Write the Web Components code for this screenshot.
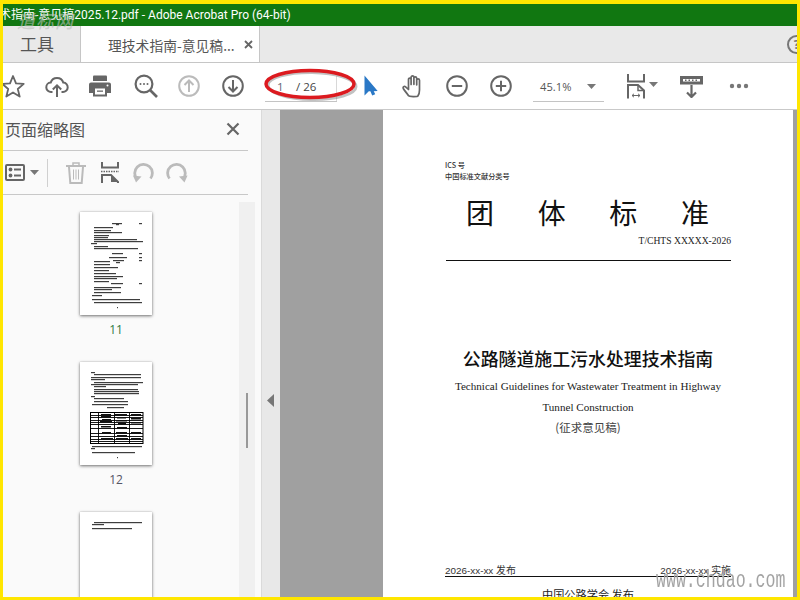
<!DOCTYPE html>
<html lang="zh"><head><meta charset="utf-8"><title>Acrobat</title>
<style>html,body{margin:0;padding:0;background:#fff}</style></head>
<body>
<acro-app>
  <acro-titlebar slot="title">术指南-意见稿2025.12.pdf - Adobe Acrobat Pro (64-bit)</acro-titlebar>
  <acro-tabs slot="tabs"></acro-tabs>
  <acro-toolbar slot="toolbar"></acro-toolbar>
  <acro-sidebar slot="side"></acro-sidebar>
  <acro-splitter slot="split"></acro-splitter>
  <acro-canvas slot="canvas"><acro-page></acro-page></acro-canvas>
  <acro-overlay slot="over"></acro-overlay>
</acro-app>
<script>
const SANS='"Open Sans","Noto Sans CJK SC",sans-serif';
const UI='Roboto,"Noto Sans CJK SC",sans-serif';
const CJK='"Noto Sans CJK SC",sans-serif';
const SERIF='"Liberation Serif","Noto Sans CJK SC",serif';
function def(name,css,html,init){
  customElements.define(name,class extends HTMLElement{
    constructor(){super();const r=this.attachShadow({mode:'open'});
      r.innerHTML='<style>'+css+'</style>'+(typeof html==='function'?html(this):html);}
    connectedCallback(){if(init)init(this);}
  });
}
const G='#666';
const ICONS={
 star:[24,24,`<polygon points="12,2 15,9.3 22.7,9.9 16.8,15 18.7,22.6 12,18.5 5.3,22.6 7.2,15 1.3,9.9 9,9.3" fill="none" stroke="${G}" stroke-width="1.8" stroke-linejoin="round"/>`],
 cloud:[24,24,`<path d="M7.5 18H6.3a4.7 4.7 0 0 1-.6-9.4 6.6 6.6 0 0 1 12.6 0 4.7 4.7 0 0 1-.6 9.4h-1.2" fill="none" stroke="${G}" stroke-width="2"/><path d="M12 23V11.5M7.8 15.5l4.2-4.2 4.2 4.2" fill="none" stroke="${G}" stroke-width="2"/>`],
 print:[24,24,`<path d="M6 1.500h12a1 1 0 0 1 1 1V7H5V2.500a1 1 0 0 1 1-1z" fill="${G}"/><path d="M3 8.500h18a2 2 0 0 1 2 2V19h-4v3.500H5V19H1v-8.500a2 2 0 0 1 2-2z" fill="${G}"/><rect x="7" y="14.500" width="10" height="6" fill="#fff"/><rect x="9" y="16.500" width="6" height="1.300" fill="${G}"/><circle cx="19.500" cy="11.500" r="1" fill="#fff"/>`],
 search:[24,24,`<circle cx="10" cy="10" r="8.400" fill="none" stroke="${G}" stroke-width="2.200"/><path d="M16 16l7 7" stroke="${G}" stroke-width="2.600"/><circle cx="6.500" cy="10" r="1" fill="${G}"/><circle cx="10" cy="10" r="1" fill="${G}"/><circle cx="13.500" cy="10" r="1" fill="${G}"/>`],
 up:[24,24,`<circle cx="12" cy="12" r="9.800" fill="none" stroke="#bbb" stroke-width="2"/><path d="M12 18V6.500M7.500 11l4.500-4.500 4.500 4.500" fill="none" stroke="#bbb" stroke-width="2"/>`],
 down:[24,24,`<circle cx="12" cy="12" r="9.800" fill="none" stroke="${G}" stroke-width="2"/><path d="M12 6v11.500M7.500 13l4.500 4.500 4.500-4.500" fill="none" stroke="${G}" stroke-width="2"/>`],
 cursor:[14,21,`<path d="M.5 .5v20l4.300-4.200 .2 0 3.500-.1 5.200-.1z" fill="#2a78c6"/><path d="M5.500 14l2.700 6.500 3-1.300-2.800-6z" fill="#2a78c6"/>`],
 hand:[24,24,`<path d="M6.500 21.500C4.500 19 1.800 15.500 1.300 14.500c-.7-1.600 1-2.800 2.300-1.700l2.900 2.700V5.500c0-1.800 2.500-1.800 2.600 0v5-7.200c0-1.800 2.700-1.800 2.800 0v7-6c0-1.800 2.700-1.800 2.800 0v6.500-4.500c0-1.800 2.700-1.800 2.800 0v9.700c0 2.500-.6 4.600-1.600 6 -.5 .7-8.600 .9-9.700-.5z" fill="none" stroke="${G}" stroke-width="1.700" stroke-linejoin="round"/>`],
 minus:[24,24,`<circle cx="12" cy="12" r="9.800" fill="none" stroke="${G}" stroke-width="2"/><path d="M6.800 12h10.400" stroke="${G}" stroke-width="2"/>`],
 plus:[24,24,`<circle cx="12" cy="12" r="9.800" fill="none" stroke="${G}" stroke-width="2"/><path d="M6.800 12h10.400M12 6.800v10.400" stroke="${G}" stroke-width="2"/>`],
 caret:[9,5,`<path d="M0 0h9L4.500 5z" fill="#777"/>`],
 fit:[18,25,`<path d="M1 0v7.500h16V0" fill="none" stroke="${G}" stroke-width="2"/><path d="M1 24.500V11h10l6 5.500v8" fill="none" stroke="${G}" stroke-width="2"/><path d="M11 11v5.500h6" fill="none" stroke="${G}" stroke-width="1.500"/><path d="M5 21.500h8M5 21.500l2-1.700M5 21.500l2 1.700M13 21.500l-2-1.700M13 21.500l-2 1.700" fill="none" stroke="${G}" stroke-width="1"/>`],
 read:[23,23,`<rect x="0" y="1" width="23" height="8.500" fill="${G}"/><path d="M3 4h17v2.500H3z" fill="#fff"/><path d="M5 4.500h1.500v1.500H5zM8.500 4.500H10v1.500H8.500zM12 4.500h1.500v1.500H12zM15.500 4.500H17v1.500h-1.500z" fill="${G}"/><path d="M11.500 10v12M7 17.500l4.500 4.500 4.500-4.500" fill="none" stroke="${G}" stroke-width="2.200"/>`],
 dots:[20,6,`<circle cx="3" cy="3" r="2.200" fill="#777"/><circle cx="10" cy="3" r="2.200" fill="#777"/><circle cx="17" cy="3" r="2.200" fill="#777"/>`],
 list:[20,17,`<rect x="1" y="1" width="18" height="15" rx="1" fill="none" stroke="${G}" stroke-width="2"/><circle cx="5.500" cy="5.500" r="1.900" fill="${G}"/><circle cx="5.500" cy="11.500" r="1.900" fill="${G}"/><path d="M9 5.500h7M9 11.500h7" stroke="${G}" stroke-width="1.800"/>`],
 trash:[20,22,`<path d="M0 4h20" stroke="#bbb" stroke-width="2"/><path d="M7 3.500V1h6v2.500" fill="none" stroke="#bbb" stroke-width="1.500"/><path d="M3 5l1.300 16h11.400L17 5" fill="none" stroke="#bbb" stroke-width="2"/><path d="M7.500 7.500v10M10 7.500v10M12.500 7.500v10" stroke="#bbb" stroke-width="1"/>`],
 pages:[18,21,`<path d="M1 0v5.500h16V0" fill="none" stroke="${G}" stroke-width="2"/><path d="M0 9.500h18" stroke="${G}" stroke-width="1.500" stroke-dasharray="1.500 1"/><path d="M1 21v-8h9l7 7v1" fill="none" stroke="${G}" stroke-width="2"/><path d="M10 13v7h7z" fill="${G}"/>`],
 undo:[21,21,`<path d="M4 17A8.800 8.800 0 1 1 17.500 16.500" fill="none" stroke="#bbb" stroke-width="2.800"/><path d="M0 13.500l8.500 1-5.500 6z" fill="#bbb"/>`],
 redo:[22,21,`<path d="M17 17A8.800 8.800 0 1 0 3.500 16.500" fill="none" stroke="#bbb" stroke-width="2.800"/><path d="M21.500 13.500l-8.500 1 5.500 6z" fill="#bbb"/>`],
 x:[14,14,`<path d="M1.500 1.500l11 11M12.500 1.500l-11 11" stroke="#666" stroke-width="2.200"/>`],
 tx:[9,9,`<path d="M1 1l7 7M8 1L1 8" stroke="#666" stroke-width="1.800"/>`]
};
def('acro-icon',':host{display:block;flex:none;line-height:0}svg{display:block}',h=>{
  const [w,ht,b]=ICONS[h.getAttribute('name')];
  return `<svg width="${w}" height="${ht}" viewBox="0 0 ${w} ${ht}" xmlns="http://www.w3.org/2000/svg">${b}</svg>`;
});

def('acro-app',`:host{display:grid;box-sizing:border-box;width:800px;height:600px;overflow:hidden;position:relative;
  border:solid #ffe600;border-width:4px 3px 3px 3px;background:#fff;
  grid-template-columns:259px 18px 1fr;grid-template-rows:22px 37px 47px 1fr;font-family:${SANS}}
  ::slotted([slot=title]),::slotted([slot=tabs]),::slotted([slot=toolbar]){grid-column:1/-1}
  ::slotted([slot=over]){position:absolute;inset:0;pointer-events:none}`,
 `<slot name="title"></slot><slot name="tabs"></slot><slot name="toolbar"></slot><slot name="side"></slot><slot name="split"></slot><slot name="canvas"></slot><slot name="over"></slot>`);

def('acro-titlebar',`:host{display:block;background:#117711;color:#fff;font:12px/22px ${UI};white-space:nowrap;overflow:hidden}
  span{display:block;margin-left:-4px}`,`<span><slot></slot></span>`);

def('acro-tabs',`:host{display:flex;box-sizing:border-box;background:#e9e9e9;border-bottom:1px solid #c6c6c6;overflow:hidden;align-items:stretch;position:relative}
 .t{width:78px;box-sizing:border-box;padding-left:17px;font:17px/35px ${CJK};color:#555;border-right:1px solid #c6c6c6}
 .d{width:179px;box-sizing:border-box;background:#fff;margin-bottom:-1px;padding-left:27px;display:flex;align-items:center;border-right:1px solid #c6c6c6;font:13.800px ${CJK};color:#555;white-space:nowrap}
 .d acro-icon{margin-left:9px}
 .h{margin-left:auto;width:19px;height:19px;flex:none;align-self:center;margin-right:-9px;box-sizing:border-box;border:2px solid #777;border-radius:50%;font:bold 12px/15px ${SANS};color:#777;text-align:center}`,
 `<div class="t">工具</div><div class="d"><span>理技术指南-意见稿...</span><acro-icon name="tx"></acro-icon></div><div class="h">?</div>`);

def('acro-toolbar',`:host{display:flex;box-sizing:border-box;background:#fff;border-bottom:1px solid #c9c9c9;align-items:center;overflow:hidden;padding-bottom:1px}
 .pg{width:72px;height:30px;box-sizing:border-box;margin-top:3px;margin-left:20px;flex:none;border-bottom:1px solid #c4c4c4;display:flex;align-items:center;font:11.500px ${SANS};color:#444;position:relative}
 .pg i{font-style:normal;color:#667;margin-left:12px;width:19px}
 .pg b{font-weight:400}
 .pg::after{content:"";position:absolute;right:0;top:4px;bottom:0;width:1px;background:#d8d8d8}
 .z{width:71px;height:30px;box-sizing:border-box;margin-top:3px;flex:none;margin-left:20px;border-bottom:1px solid #c4c4c4;display:flex;align-items:center;font:11.200px ${SANS};color:#555;padding-left:7px}
 .z acro-icon{margin-left:16px}`,
 `<acro-icon name="star" style="margin-left:-2px"></acro-icon>
  <acro-icon name="cloud" style="margin-left:20px"></acro-icon>
  <acro-icon name="print" style="margin-left:19px"></acro-icon>
  <acro-icon name="search" style="margin-left:22px"></acro-icon>
  <acro-icon name="up" style="margin-left:19px"></acro-icon>
  <acro-icon name="down" style="margin-left:20px"></acro-icon>
  <div class="pg"><i>1</i><b>/ 26</b></div>
  <acro-icon name="cursor" style="margin-left:27px"></acro-icon>
  <acro-icon name="hand" style="margin-left:24px"></acro-icon>
  <acro-icon name="minus" style="margin-left:19px"></acro-icon>
  <acro-icon name="plus" style="margin-left:20px"></acro-icon>
  <div class="z"><span>45.1%</span><acro-icon name="caret"></acro-icon></div>
  <acro-icon name="fit" style="margin-left:23px;margin-top:1px"></acro-icon>
  <acro-icon name="caret" style="margin-left:4px;margin-bottom:2px"></acro-icon>
  <acro-icon name="read" style="margin-left:22px;margin-top:1px"></acro-icon>
  <acro-icon name="dots" style="margin-left:26px"></acro-icon>`);

def('acro-sidebar',`:host{display:flex;flex-direction:column;background:#fafafa;overflow:hidden;min-height:0;border-right:1px solid #dadada;box-sizing:border-box}
 .hd{width:245px;height:41px;box-sizing:border-box;flex:none;border-bottom:1px solid #c8c8c8;display:flex;align-items:center;justify-content:space-between;padding:0 8px 2px 2px;font:16px ${CJK};color:#555}
 .tb{width:245px;height:44px;box-sizing:border-box;flex:none;border-bottom:1px solid #c8c8c8;display:flex;align-items:center;padding-left:2px}
 .sep{width:1px;height:28px;background:#d0d0d0;flex:none}
 .body{display:flex;flex:1;min-height:0;overflow:hidden}
 .th{width:226px;flex:none;padding-top:17px}
 .sb{width:16px;margin-left:10px;margin-top:7px;flex:none;background:#f0f0f0;overflow:hidden}
 .sb i{display:block;width:2px;height:55px;background:#999;margin:191px 0 0 7px}`,
 `<div class="hd"><span>页面缩略图</span><acro-icon name="x"></acro-icon></div>
  <div class="tb"><acro-icon name="list"></acro-icon><acro-icon name="caret" style="margin-left:5px"></acro-icon>
   <div class="sep" style="margin-left:8px"></div>
   <acro-icon name="trash" style="margin-left:18px"></acro-icon>
   <acro-icon name="pages" style="margin-left:15px"></acro-icon>
   <acro-icon name="undo" style="margin-left:14px"></acro-icon>
   <acro-icon name="redo" style="margin-left:12px"></acro-icon></div>
  <div class="body"><div class="th">
    <acro-thumb page="11" label="11" cur></acro-thumb>
    <acro-thumb page="12" label="12"></acro-thumb>
    <acro-thumb page="13" label=""></acro-thumb>
  </div><div class="sb"><i></i></div></div>`);

const P={
 11:{l:[[32,11,10],[59,11,3],[36,12,3],[14,15,19],[14,18,17],[14,20,28],[14,23,15],[14,25,14],[14,27,43],[14,29,49],[11,31,6],[14,34,14],[14,36,44],[32,41,11],[59,41,3],[29,45,18],[59,45,3],[33,48,11],[36,50,4],[59,48,3],[14,49,16],[14,52,16],[14,55,24],[14,58,15],[14,61,22],[14,64,29],[14,66,23],[14,69,15],[31,71,12],[59,71,3],[14,75,27],[14,77,18],[14,80,27],[12,83,10],[12,87,48],[14,90,48],[37,95,1]],t:0},
 12:{l:[[11,10,4],[14,12,47],[11,15,50],[11,17,14],[14,20,49],[11,22,47],[14,24,12],[14,27,44],[14,29,45],[14,31,45],[11,34,4],[14,36,30],[14,39,34],[12,42,36],[27,45,17],[12,84,50],[11,86,4],[12,90,43],[37,95,1]],t:1},
 13:{l:[[14,10,48],[12,12,12],[12,16,40]],t:0}
};
def('acro-thumb',`:host{display:block;height:150px;text-align:center;font:12px/16px ${SANS};color:#556}
 :host([cur]){color:#2f7a45}
 svg{display:block;margin:0 auto;background:#fff;box-shadow:0 1px 3px rgba(0,0,0,.55),0 0 1px rgba(0,0,0,.2)}
 .bl{filter:blur(.35px)}
 div{margin-top:7px}`,h=>{
  const d=P[h.getAttribute('page')];
  let s='<g class="bl" fill="#1d1d1d" opacity=".85">'+d.l.map(a=>`<rect x="${a[0]}" y="${a[1]}" width="${a[2]}" height="1.200"/>`).join('')+'</g>';
  if(d.t){
    s+='<g stroke="#000" stroke-width=".9" fill="none"><rect x="10.500" y="50.500" width="52.500" height="31" stroke-width="1"/>';
    [18,34,49].forEach(x=>s+=`<path d="M${x}.5 50v32"/>`);
    [53,55,58,60,62,66,71,74,77,79].forEach(y=>s+=`<path d="M10 ${y}.5h53"/>`);
    s+='</g><g class="bl" fill="#111">';
    [[21,52,10],[21,54,10],[22,57,9],[20,59,12],[35,52,12],[37,55,9],[36,58,11],[38,61,8],[37,65,10],[36,70,11],[37,73,10],[36,76,12],[21,64,10],[22,70,9],[21,76,12],[51,52,10],[51,56,10],[51,60,10],[51,70,10],[51,76,10]].forEach(a=>s+=`<rect x="${a[0]}" y="${a[1]}" width="${a[2]}" height="1.500"/>`);
    s+='</g>';
  }
  return `<svg width="72" height="103" viewBox="0 0 72 103" xmlns="http://www.w3.org/2000/svg">${s}</svg><div>${h.getAttribute('label')}</div>`;
});

def('acro-splitter',`:host{display:flex;align-items:center;justify-content:center;background:#e8e8e8;padding-top:94px;box-sizing:border-box}
 svg{display:block;margin-left:-1px}`,`<svg width="7" height="13" viewBox="0 0 7 13"><path d="M7 0v13L0 6.500z" fill="#777"/></svg>`);

def('acro-canvas',`:host{display:block;background:#a0a0a0;padding-left:103px;overflow:hidden;min-height:0}`,`<slot></slot>`);

def('acro-page',`:host{display:block;width:410px;height:490px;background:#fff;overflow:hidden;box-sizing:border-box;padding:50px 0 0 62px;color:#111}
 .k{font:500 7.200px/11px ${CJK};color:#333;height:11px}
 .b{display:flex;width:243px;margin:10px 0 0 21px;justify-content:space-between;font:28px/40px ${CJK};color:#111}
 .no{width:286px;text-align:right;font:9.600px/14px ${SERIF};margin-top:2px;color:#222}
 .r{width:285px;height:1px;background:#111;margin:12px 0 0 1px}
 .c{width:286px;text-align:center}
 .t{font:500 17.900px/26px ${CJK};margin-top:84px;color:#111}
 .e{font:11.100px/21px ${SERIF};white-space:nowrap;color:#222}
 .e.a{margin-top:5px}
 .z{font:11.500px/21px ${CJK};color:#444;margin-top:-1px}
 .d{display:flex;justify-content:space-between;width:286px;font:9.900px/11px "Liberation Sans","Noto Sans CJK SC",sans-serif;margin-top:127px;color:#333}
 .l2{width:286px;height:1px;background:#111;margin-top:0}
 .p{font:11.200px/16px ${CJK};margin-top:9px;color:#222}`,
 `<div class="k">ICS 号</div><div class="k">中国标准文献分类号</div>
  <div class="b"><span>团</span><span>体</span><span>标</span><span>准</span></div>
  <div class="no">T/CHTS XXXXX-2026</div><div class="r"></div>
  <div class="c t">公路隧道施工污水处理技术指南</div>
  <div class="c e a">Technical Guidelines for Wastewater Treatment in Highway</div>
  <div class="c e">Tunnel Construction</div>
  <div class="c z">(征求意见稿)</div>
  <div class="d"><span>2026-xx-xx 发布</span><span>2026-xx-xx 实施</span></div><div class="l2"></div>
  <div class="c p">中国公路学会 发布</div>`);

def('acro-overlay',`.w1{position:absolute;left:14px;top:5px;font:500 18px/22px ${CJK};letter-spacing:1px;color:rgba(185,190,185,.6);font-style:italic}
 svg{position:absolute;left:258px;top:60px}
 .w2{position:absolute;left:653px;top:567px;font:16.600px/20px "Liberation Mono",monospace;color:#a3a3a3;transform:scaleY(1.400);transform-origin:0 50%;white-space:nowrap}`,
 `<div class="w1">道标网</div>
  <svg width="104" height="42" viewBox="0 0 104 42"><ellipse cx="51" cy="22" rx="44" ry="13.500" fill="none" stroke="#777" stroke-opacity=".45" stroke-width="3" transform="rotate(1 51 22)"/><ellipse cx="49" cy="20" rx="44" ry="13.500" fill="none" stroke="#dc1a1f" stroke-width="3.500"/></svg>
  <div class="w2">www.chdao.com</div>`);
</script>
</body></html>
